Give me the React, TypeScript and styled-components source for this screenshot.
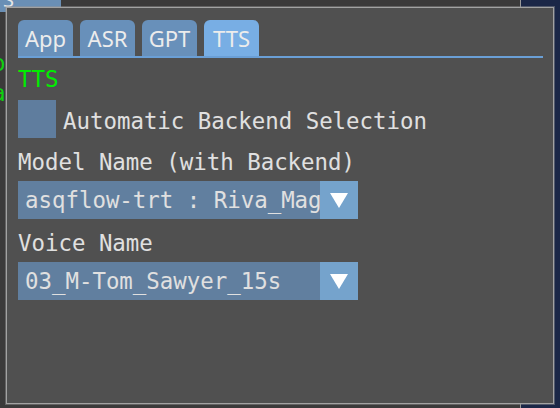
import { useState } from 'react'
import styled, { createGlobalStyle } from 'styled-components'

const GlobalStyle = createGlobalStyle`
  html, body {
    margin: 0;
    padding: 0;
    background: #3a3838;
  }
  body {
    font-family: "DejaVu Sans Mono", "Liberation Mono", monospace;
  }
`

const Desktop = styled.div`
  position: relative;
  width: 560px;
  height: 408px;
  overflow: hidden;
  box-sizing: border-box;
  padding: 7px 6px 4px 6px;
  background: linear-gradient(to right, #3b3a3a 0 520px, #9a9a9a 520px 521px, #1b2747 521px);
`

// bits of other windows peeking out from under the settings window
const BehindTab = styled.div`
  position: absolute;
  left: 0;
  top: -12px;
  width: 61px;
  height: 24px;
  background: #6a8fb5;
  color: #e6e6e6;
  font: 20px "Noto Sans", sans-serif;
  line-height: 24px;
  padding-left: 3px;
  box-sizing: border-box;
`

const BehindLog = styled.div`
  position: absolute;
  left: -8px;
  top: 48px;
  color: #10d010;
  font-size: 22.4px;
  line-height: 30px;
`

const Window = styled.div`
  position: relative;
  height: 100%;
  box-sizing: border-box;
  background: #505050;
  border: 1px solid #a2a2a2;
  box-shadow: 0 0 0 1px rgba(150, 150, 150, 0.45);
  padding: 12px 10px 0 11px;
  display: flex;
  flex-direction: column;
`

const TabBar = styled.div`
  display: flex;
  gap: 7px;
  border-bottom: 2px solid #6a9fd6;
`

const Tab = styled.button<{ $active?: boolean }>`
  width: 55px;
  height: 36px;
  border: 0;
  padding: 0;
  border-radius: 6px 6px 0 0;
  background: ${p => (p.$active ? '#78aee4' : '#6890ba')};
  color: #ececec;
  font: 22px "Noto Sans", "DejaVu Sans", sans-serif;
  line-height: 37px;
  text-align: center;
  cursor: pointer;
`

const Body = styled.div`
  display: flex;
  flex-direction: column;
  color: #e0e0e0;
  font-size: 22.4px;
  line-height: 26px;
`

const SectionTitle = styled.div`
  margin-top: 8px;
  color: #00ee00;
`

const CheckRow = styled.label`
  margin-top: 8px;
  display: flex;
  align-items: center;
  gap: 7px;
  cursor: pointer;
`

const CheckBox = styled.span<{ $on: boolean }>`
  width: 38px;
  height: 38px;
  background: #5f7d9e;
  display: flex;
  align-items: center;
  justify-content: center;
  color: #ffffff;
`

const CheckLabel = styled.span`
  padding-top: 3px;
`

const FieldLabel = styled.div`
  margin: 11px 0 6px;
`

const Combo = styled.div`
  width: 340px;
  height: 38px;
  display: flex;
  background: #617f9f;
`

const ComboValue = styled.div`
  flex: 1;
  min-width: 0;
  overflow: hidden;
  white-space: nowrap;
  padding-left: 7px;
  line-height: 38px;
`

const ComboButton = styled.div`
  width: 38px;
  height: 38px;
  background: #75a3cc;
  display: flex;
  align-items: center;
  justify-content: center;
`

function Arrow() {
  return (
    <svg width="18" height="15" viewBox="0 0 18 15">
      <polygon points="0,0 18,0 9,15" fill="#ffffff" />
    </svg>
  )
}

function ComboBox({ value }: { value: string }) {
  return (
    <Combo>
      <ComboValue>{value}</ComboValue>
      <ComboButton><Arrow /></ComboButton>
    </Combo>
  )
}

const tabs = ['App', 'ASR', 'GPT', 'TTS']

export default function App() {
  const [active, setActive] = useState('TTS')
  const [auto, setAuto] = useState(false)

  return (
    <>
      <GlobalStyle />
      <Desktop>
        <BehindTab>S</BehindTab>
        <BehindLog>
          <div>o</div>
          <div>a</div>
        </BehindLog>
        <Window>
          <TabBar>
            {tabs.map(t => (
              <Tab key={t} $active={t === active} onClick={() => setActive(t)}>{t}</Tab>
            ))}
          </TabBar>
          <Body>
            <SectionTitle>TTS</SectionTitle>
            <CheckRow onClick={() => setAuto(!auto)}>
              <CheckBox $on={auto}>{auto ? '✓' : null}</CheckBox>
              <CheckLabel>Automatic Backend Selection</CheckLabel>
            </CheckRow>
            <FieldLabel>Model Name (with Backend)</FieldLabel>
            <ComboBox value="asqflow-trt : Riva_Magpie-Multilingual" />
            <FieldLabel>Voice Name</FieldLabel>
            <ComboBox value="03_M-Tom_Sawyer_15s" />
          </Body>
        </Window>
      </Desktop>
    </>
  )
}
